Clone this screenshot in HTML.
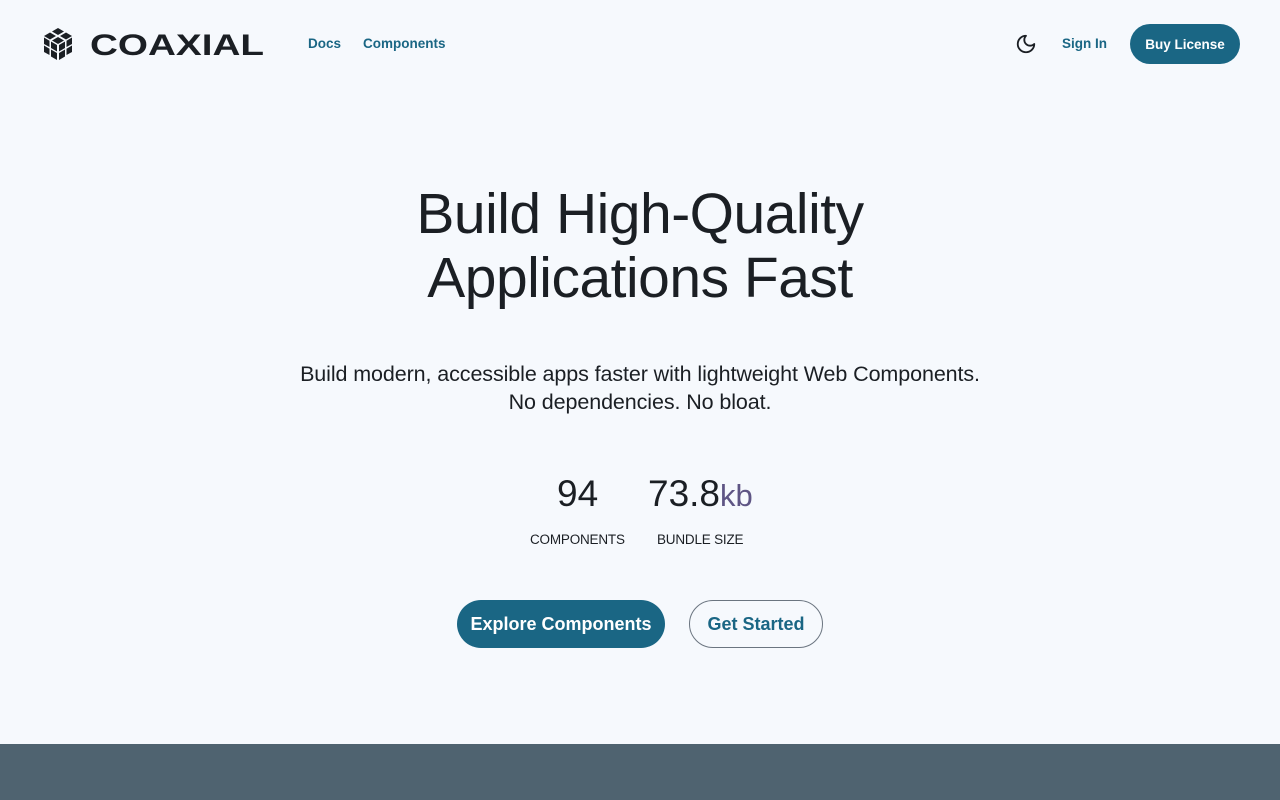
<!DOCTYPE html>
<html><head><meta charset="utf-8"><style>
*{box-sizing:border-box;margin:0;padding:0}
body{width:1280px;height:800px;background:#f6f9fd;font-family:"Liberation Sans",sans-serif;color:#1b1f24;position:relative;overflow:hidden}
.nav a{position:absolute;top:36px;font-size:13.5px;font-weight:bold;color:#1a6684;text-decoration:none}
.btn{position:absolute;border-radius:24px;display:flex;align-items:center;justify-content:center;font-weight:bold}
h1{position:absolute;top:182px;left:0;width:1280px;text-align:center;font-weight:normal;font-size:57px;line-height:64px;color:#1b1f24;letter-spacing:-0.5px}
.sub{position:absolute;top:360px;left:0;width:1280px;text-align:center;font-size:21.5px;line-height:28px;letter-spacing:-0.1px}
.num{position:absolute;top:472px;font-size:37px;line-height:44px}
.lab{position:absolute;top:532px;font-size:13.5px;line-height:16px;letter-spacing:-0.2px}
footer{position:absolute;top:744px;left:0;width:1280px;height:56px;background:#4f6370}
</style></head><body>
<svg style="position:absolute;left:43px;top:27px" width="30" height="34" viewBox="0 0 30 34">
<g fill="#1b1f24">
<polygon points="15,1 21,4.5 15,8 9,4.5"/>
<polygon points="7,5.5 13,9 7,12.5 1,9"/>
<polygon points="23,5.5 29,9 23,12.5 17,9"/>
<polygon points="15,10 21,13.5 15,17 9,13.5"/>
<polygon points="1,10.5 6.5,13.7 6.5,20 1,17"/>
<polygon points="29,10.5 23.5,13.7 23.5,20 29,17"/>
<polygon points="8,14.5 14,18 14,24.5 8,21"/>
<polygon points="22,14.5 16,18 16,24.5 22,21"/>
<polygon points="1,18.5 6.5,21.7 6.5,28 1,25"/>
<polygon points="29,18.5 23.5,21.7 23.5,28 29,25"/>
<polygon points="8,22.5 14,26 14,33 8,29.5"/>
<polygon points="22,22.5 16,26 16,33 22,29.5"/>
</g></svg>
<svg style="position:absolute;left:88px;top:28px" width="180" height="32"><text x="2" y="27" font-family="Liberation Sans" font-weight="bold" font-size="30" textLength="174" lengthAdjust="spacingAndGlyphs" fill="#1b1f24">COAXIAL</text></svg>
<div class="nav"><a style="left:308px">Docs</a><a style="left:363px">Components</a><a style="left:1062px">Sign In</a></div>
<svg style="position:absolute;left:1015px;top:33px" width="22" height="22" viewBox="0 0 24 24"><path d="M12 3a6 6 0 0 0 9 9 9 9 0 1 1-9-9z" fill="none" stroke="#1b1f24" stroke-width="2" stroke-linejoin="round"/></svg>
<div class="btn" style="left:1130px;top:24px;width:110px;height:40px;background:#1a6684;color:#fff;font-size:13.5px">Buy License</div>
<h1>Build High-Quality<br>Applications Fast</h1>
<div class="sub">Build modern, accessible apps faster with lightweight Web Components.<br>No dependencies. No bloat.</div>
<div class="num" style="left:557px">94</div>
<div class="num" style="left:648px">73.8<span style="color:#5e5584;font-size:31px">kb</span></div>
<div class="lab" style="left:530px">COMPONENTS</div>
<div class="lab" style="left:657px">BUNDLE SIZE</div>
<div class="btn" style="left:457px;top:600px;width:208px;height:48px;background:#1a6684;color:#fff;font-size:18px">Explore Components</div>
<div class="btn" style="left:689px;top:600px;width:134px;height:48px;border:1px solid #6b7580;color:#1a6684;font-size:18px">Get Started</div>
<footer></footer>
</body></html>
